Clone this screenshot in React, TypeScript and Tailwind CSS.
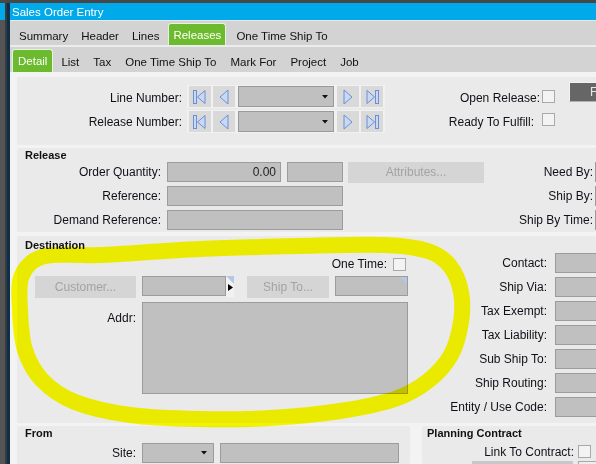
import React from "react";

const ICON_FILL = "#c9d9f3";
const ICON_STROKE = "#6a8fd6";

type Kind = "first" | "prev" | "next" | "last";

function NavIcon({ kind }: { kind: Kind }) {
  return (
    <svg width="22" height="22" viewBox="0 0 22 22">
      {kind === "first" && (
        <>
          <rect x="4.5" y="4.5" width="3" height="13" fill={ICON_FILL} stroke={ICON_STROKE} />
          <polygon points="16,4.5 8.5,11 16,17.5" fill={ICON_FILL} stroke={ICON_STROKE} strokeLinejoin="round" />
        </>
      )}
      {kind === "prev" && (
        <polygon points="15,4 7,11 15,18" fill={ICON_FILL} stroke={ICON_STROKE} strokeLinejoin="round" />
      )}
      {kind === "next" && (
        <polygon points="7,4 15,11 7,18" fill={ICON_FILL} stroke={ICON_STROKE} strokeLinejoin="round" />
      )}
      {kind === "last" && (
        <>
          <polygon points="6,4.5 13.5,11 6,17.5" fill={ICON_FILL} stroke={ICON_STROKE} strokeLinejoin="round" />
          <rect x="14.5" y="4.5" width="3" height="13" fill={ICON_FILL} stroke={ICON_STROKE} />
        </>
      )}
    </svg>
  );
}

function NavBtn({ kind }: { kind: Kind }) {
  return (
    <div className="flex h-[21px] w-[22px] shrink-0 items-center justify-center bg-[#d9d9d9]">
      <NavIcon kind={kind} />
    </div>
  );
}

function Caret() {
  return (
    <svg width="6" height="4" viewBox="0 0 6 4">
      <polygon points="0,0 6,0 3,3.5" fill="#111" />
    </svg>
  );
}

function NavGroup() {
  return (
    <div className="flex h-[23px] w-[198px] shrink-0 items-center gap-[2px] bg-[#f1f1f1] px-[2px]">
      <NavBtn kind="first" />
      <NavBtn kind="prev" />
      <div className="mx-[1px] flex h-[21px] w-[96px] shrink-0 items-center justify-end border border-[#999999] bg-[#c0c0c0] pr-[5px]">
        <Caret />
      </div>
      <NavBtn kind="next" />
      <NavBtn kind="last" />
    </div>
  );
}

function Check() {
  return <div className="h-[13px] w-[13px] shrink-0 border border-[#a9a9a9] bg-[#f3f3f3]" />;
}

function Input({ w, children }: { w: string; children?: React.ReactNode }) {
  return (
    <div className={`${w} relative h-[20px] shrink-0 border border-[#9c9c9c] bg-[#c0c0c0] text-right text-[12px] leading-[18px] text-[#222]`}>
      {children}
    </div>
  );
}

function DisabledBtn({ w, label, h = "h-[22px]" }: { w: string; label: string; h?: string }) {
  return (
    <div className={`${w} ${h} flex shrink-0 items-center justify-center bg-[#d5d5d5] text-[12px] text-[#a3a3a3]`}>
      {label}
    </div>
  );
}

function smoothClosed(pts: [number, number][]) {
  const n = pts.length;
  let d = `M${pts[0][0]},${pts[0][1]}`;
  for (let i = 0; i < n; i++) {
    const p0 = pts[(i - 1 + n) % n];
    const p1 = pts[i];
    const p2 = pts[(i + 1) % n];
    const p3 = pts[(i + 2) % n];
    const c1x = p1[0] + (p2[0] - p0[0]) / 6;
    const c1y = p1[1] + (p2[1] - p0[1]) / 6;
    const c2x = p2[0] - (p3[0] - p1[0]) / 6;
    const c2y = p2[1] - (p3[1] - p1[1]) / 6;
    d += ` C${c1x.toFixed(1)},${c1y.toFixed(1)} ${c2x.toFixed(1)},${c2y.toFixed(1)} ${p2[0]},${p2[1]}`;
  }
  return d + " Z";
}

const ELLIPSE = smoothClosed([
  [45, 256],
  [100, 255],
  [200, 249],
  [300, 246],
  [385, 245],
  [428, 251],
  [450, 266],
  [461, 292],
  [461, 322],
  [451, 355],
  [428, 381],
  [395, 399],
  [340, 411],
  [270, 418],
  [200, 419],
  [130, 415],
  [75, 402],
  [42, 380],
  [25, 350],
  [20, 310],
  [22, 275],
]);

const label = "text-[12px] text-[#101018] text-right shrink-0";

export default function App() {
  return (
    <div className="relative flex h-[464px] w-[596px] flex-col overflow-hidden bg-[#505050] font-['Liberation_Sans',Arial,sans-serif]">
      <div className="h-[3px] shrink-0 bg-[#474747]" />
      <div className="flex min-h-0 flex-1">
        <div className="flex w-[5px] shrink-0 flex-col">
          <div className="h-[17px] bg-[#00a9ea]" />
          <div className="flex-1 bg-[#555555]" />
        </div>
        <div className="w-[2px] shrink-0 bg-[#3a3a3a]" />
        <div className="w-[3px] shrink-0 bg-[#0c2f4c]" />
        <div className="flex min-w-0 flex-1 flex-col">
          {/* Title */}
          <div className="flex h-[17px] shrink-0 items-center bg-[#00a9ea] pl-[2px] text-[11.5px] leading-[14px] text-white">
            Sales Order Entry
          </div>
          <div className="h-[1px] shrink-0 bg-[#e8e8e8]" />
          {/* Tabs row 1 */}
          <div className="flex h-[24px] shrink-0 items-end bg-[#d3d3d3] pl-[3px] text-[11.5px] leading-[14px] text-[#111]">
            <div className="flex h-[22px] items-center px-[6px] pt-[3px]">Summary</div>
            <div className="flex h-[22px] items-center pl-[7px] pr-[6px] pt-[3px]">Header</div>
            <div className="flex h-[22px] items-center pl-[7px] pr-[6px] pt-[3px]">Lines</div>
            <div className="ml-[3px] flex h-[22px] items-center rounded-t-[3px] border border-b-0 border-[#e6f2dc] bg-[#6cbb2e] px-[4px] text-white">
              Releases
            </div>
            <div className="ml-[4px] flex h-[22px] items-center px-[6px] pt-[3px]">One Time Ship To</div>
          </div>
          <div className="h-[2px] shrink-0 bg-[#ececec]" />
          {/* Tabs row 2 */}
          <div className="flex h-[25px] shrink-0 items-end bg-[#d3d3d3] pl-[2px] text-[11.5px] leading-[14px] text-[#111]">
            <div className="flex h-[23px] items-center rounded-t-[3px] border border-b-0 border-[#e6f2dc] bg-[#6cbb2e] px-[5px] text-white">
              Detail
            </div>
            <div className="ml-[1px] flex h-[23px] items-center px-[7px] pt-[2px]">List</div>
            <div className="flex h-[23px] items-center px-[7px] pt-[2px]">Tax</div>
            <div className="flex h-[23px] items-center px-[7px] pt-[2px]">One Time Ship To</div>
            <div className="flex h-[23px] items-center px-[7px] pt-[2px]">Mark For</div>
            <div className="flex h-[23px] items-center px-[7px] pt-[2px]">Project</div>
            <div className="flex h-[23px] items-center px-[7px] pt-[2px]">Job</div>
          </div>
          {/* Content */}
          <div className="flex min-h-0 flex-1 flex-col overflow-hidden bg-[#f3f3f3] pl-[7px] pt-[5px]">
            {/* Panel 1 */}
            <div className="flex h-[68px] w-[620px] shrink-0 flex-col gap-[2px] rounded-[2px] bg-[#eaeaea] pt-[8px]">
              <div className="flex h-[23px] items-center">
                <div className={`${label} w-[170px] pr-[5px] pt-[3px]`}>Line Number:</div>
                <NavGroup />
                <div className={`${label} w-[155px] pt-[2px]`}>Open Release:</div>
                <div className="ml-[2px]">
                  <Check />
                </div>
                <div className="-mt-[3px] ml-[14px] flex h-[20px] w-[40px] shrink-0 items-center self-start border border-[#f2f2f2] border-b-[#b0b0b0] bg-[#666666] pl-[20px] text-[12px] leading-[14px] text-[#e8e8e8]">
                  F
                </div>
              </div>
              <div className="flex h-[23px] items-center">
                <div className={`${label} w-[170px] pr-[5px]`}>Release Number:</div>
                <NavGroup />
                <div className={`${label} w-[149px]`}>Ready To Fulfill:</div>
                <div className="-mt-[4px] ml-[8px]">
                  <Check />
                </div>
              </div>
            </div>

            {/* Release panel */}
            <div className="mt-[3px] flex h-[84px] w-[620px] shrink-0 flex-col rounded-[2px] bg-[#eaeaea] pt-[1px]">
              <div className="h-[13px] pl-[8px] text-[11px] font-bold leading-[13px] text-[#111]">Release</div>
              <div className="flex flex-col gap-[4px]">
                <div className="flex h-[20px] items-center">
                  <div className={`${label} w-[144px]`}>Order Quantity:</div>
                  <div className="ml-[6px]">
                    <Input w="w-[114px]">
                      <span className="pr-[4px]">0.00</span>
                    </Input>
                  </div>
                  <div className="ml-[6px]">
                    <Input w="w-[56px]" />
                  </div>
                  <div className="ml-[5px]">
                    <DisabledBtn w="w-[136px]" h="h-[21px]" label="Attributes..." />
                  </div>
                  <div className={`${label} w-[109px]`}>Need By:</div>
                  <div className="ml-[2px]">
                    <Input w="w-[40px]" />
                  </div>
                </div>
                <div className="flex h-[20px] items-center">
                  <div className={`${label} w-[144px]`}>Reference:</div>
                  <div className="ml-[6px]">
                    <Input w="w-[176px]" />
                  </div>
                  <div className={`${label} w-[250px]`}>Ship By:</div>
                  <div className="ml-[2px]">
                    <Input w="w-[40px]" />
                  </div>
                </div>
                <div className="flex h-[20px] items-center">
                  <div className={`${label} w-[144px]`}>Demand Reference:</div>
                  <div className="ml-[6px]">
                    <Input w="w-[176px]" />
                  </div>
                  <div className={`${label} w-[250px]`}>Ship By Time:</div>
                  <div className="ml-[2px]">
                    <Input w="w-[40px]" />
                  </div>
                </div>
              </div>
            </div>

            {/* Destination panel */}
            <div className="mt-[4px] flex h-[187px] w-[620px] shrink-0 flex-col rounded-[2px] bg-[#eaeaea] pt-[3px]">
              <div className="h-[14px] pl-[8px] text-[11px] font-bold leading-[13px] text-[#111]">Destination</div>
              <div className="flex">
                <div className="flex w-[403px] shrink-0 flex-col">
                  <div className="mt-[5px] flex h-[13px] items-center">
                    <div className={`${label} w-[370px] leading-[13px]`}>One Time:</div>
                    <div className="ml-[6px]">
                      <Check />
                    </div>
                  </div>
                  <div className="mt-[5px] flex h-[22px] items-start">
                    <div className="ml-[18px]">
                      <DisabledBtn w="w-[101px]" label="Customer..." />
                    </div>
                    <div className="ml-[6px] flex">
                      <Input w="w-[84px]" />
                      <div className="relative h-[21px] w-[8px] bg-[#f2f2f2]">
                        <svg width="8" height="21" viewBox="0 0 8 21" className="absolute left-0 top-0">
                          <polygon points="0,0 8,0 8,8" fill="#b4c7e4" />
                          <polygon points="2,8 7,11.5 2,15" fill="#000" />
                        </svg>
                      </div>
                    </div>
                    <div className="ml-[13px]">
                      <DisabledBtn w="w-[82px]" label="Ship To..." />
                    </div>
                    <div className="ml-[6px]">
                      <Input w="w-[73px]">
                        <svg width="7" height="7" viewBox="0 0 7 7" className="absolute right-0 top-0">
                          <polygon points="0,0 7,0 7,7" fill="#b4c7e4" />
                        </svg>
                      </Input>
                    </div>
                  </div>
                  <div className="mt-[4px] flex items-start">
                    <div className={`${label} w-[119px] pt-[9px] leading-[14px]`}>Addr:</div>
                    <div className="ml-[6px] h-[92px] w-[266px] border border-[#9c9c9c] bg-[#c0c0c0]" />
                  </div>
                </div>
                <div className="flex flex-col gap-[4px]">
                  {["Contact:", "Ship Via:", "Tax Exempt:", "Tax Liability:", "Sub Ship To:", "Ship Routing:", "Entity / Use Code:"].map((t) => (
                    <div key={t} className="flex h-[20px] items-center">
                      <div className={`${label} w-[127px]`}>{t}</div>
                      <div className="ml-[8px]">
                        <Input w="w-[60px]" />
                      </div>
                    </div>
                  ))}
                </div>
              </div>
            </div>

            {/* Bottom row */}
            <div className="mt-[3px] flex min-h-0 flex-1">
              <div className="flex w-[393px] shrink-0 flex-col rounded-[2px] bg-[#eaeaea] pt-[1px]">
                <div className="h-[14px] pl-[8px] text-[11px] font-bold leading-[13px] text-[#111]">From</div>
                <div className="mt-[2px] flex h-[20px] items-center">
                  <div className={`${label} w-[119px]`}>Site:</div>
                  <div className="ml-[6px] flex h-[20px] w-[72px] shrink-0 items-center justify-end border border-[#9c9c9c] bg-[#c0c0c0] pr-[6px]">
                    <Caret />
                  </div>
                  <div className="ml-[6px]">
                    <Input w="w-[179px]" />
                  </div>
                </div>
              </div>
              <div className="ml-[12px] flex w-[200px] shrink-0 flex-col rounded-[2px] bg-[#eaeaea] pt-[1px]">
                <div className="h-[14px] pl-[5px] text-[11px] font-bold leading-[13px] text-[#111]">Planning Contract</div>
                <div className="mt-[3px] flex h-[17px] items-center">
                  <div className={`${label} w-[152px]`}>Link To Contract:</div>
                  <div className="ml-[4px]">
                    <Check />
                  </div>
                </div>
                <div className="mt-[1px] flex h-[20px] items-start">
                  <div className="ml-[50px] h-[20px] w-[101px] bg-[#c8c8c8]" />
                  <div className="ml-[5px] h-[20px] w-[30px] border border-[#a9a9a9] bg-[#ececec]" />
                </div>
              </div>
            </div>
          </div>
        </div>
      </div>

      {/* Yellow annotation */}
      <svg
        className="pointer-events-none absolute left-0 top-0 mix-blend-multiply"
        width="596"
        height="464"
        viewBox="0 0 596 464"
      >
        <path d={ELLIPSE} fill="none" stroke="#ffff00" strokeWidth="16" strokeLinejoin="round" />
      </svg>
    </div>
  );
}
